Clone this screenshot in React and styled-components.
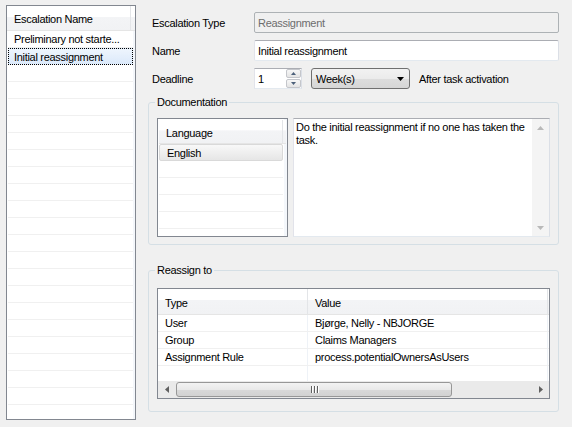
import React from 'react';
import styled, { createGlobalStyle } from 'styled-components';

const escalations = ['Preliminary not starte...', 'Initial reassignment'];
const languages = ['English'];
const assignees = [
  { type: 'User', value: 'Bjørge, Nelly - NBJORGE' },
  { type: 'Group', value: 'Claims Managers' },
  { type: 'Assignment Rule', value: 'process.potentialOwnersAsUsers' },
  { type: '', value: '' },
];

const pad = (items, count) => [...items, ...Array(Math.max(0, count - items.length)).fill('')];

const Arrow = ({ dir, color = '#000', w = 7, h = 4 }) => {
  const pts = {
    up: `0,${h} ${w / 2},0 ${w},${h}`,
    down: `0,0 ${w},0 ${w / 2},${h}`,
    left: `${h},0 ${h},${w} 0,${w / 2}`,
    right: `0,0 0,${w} ${h},${w / 2}`,
  }[dir];
  const horiz = dir === 'left' || dir === 'right';
  return (
    <Glyph width={horiz ? h : w} height={horiz ? w : h}>
      <polygon points={pts} fill={color} />
    </Glyph>
  );
};

const App = () => {
  return (
    <>
      <GlobalStyle />
      <Window>
        <NameList>
          <ListHeader $height={25}>
            <HeaderCell $width={124}>Escalation Name</HeaderCell>
          </ListHeader>
          {pad(escalations, 23).map((name, i) => (
            <NameRow key={i} $selected={i === 1}>
              {name}
            </NameRow>
          ))}
        </NameList>

        <Main>
          <FormRow>
            <Label>Escalation Type</Label>
            <TextBox $disabled>Reassignment</TextBox>
          </FormRow>
          <FormRow>
            <Label>Name</Label>
            <TextBox>Initial reassignment</TextBox>
          </FormRow>
          <FormRow>
            <Label>Deadline</Label>
            <NumberBox>
              <span>1</span>
              <Spinner>
                <SpinButton>
                  <Arrow dir="up" color="#4c607a" w={5} h={3} />
                </SpinButton>
                <SpinButton>
                  <Arrow dir="down" color="#4c607a" w={5} h={3} />
                </SpinButton>
              </Spinner>
            </NumberBox>
            <ComboBox>
              <span>Week(s)</span>
              <Arrow dir="down" w={7} h={4} />
            </ComboBox>
            <Hint>After task activation</Hint>
          </FormRow>

          <Group $top={7} $padTop={9} $padBottom={7}>
            <Legend>Documentation</Legend>
            <DocBody>
              <LangList>
                <ListHeader $height={24}>
                  <HeaderCell $width={124}>Language</HeaderCell>
                </ListHeader>
                {pad(languages, 6).map((lang, i) => (
                  <LangRow key={i} $selected={i === 0}>
                    {lang}
                  </LangRow>
                ))}
              </LangList>
              <MemoBox>
                <MemoText>Do the initial reassignment if no one has taken the task.</MemoText>
                <VScroll>
                  <ScrollButton>
                    <Arrow dir="up" color="#b9b9b9" w={7} h={4} />
                  </ScrollButton>
                  <ScrollButton>
                    <Arrow dir="down" color="#b9b9b9" w={7} h={4} />
                  </ScrollButton>
                </VScroll>
              </MemoBox>
            </DocBody>
          </Group>

          <Group $top={19} $padTop={11} $padBottom={12}>
            <Legend>Reassign to</Legend>
            <Table>
              <TableBody>
                <ListHeader $height={26}>
                  <HeaderCell $width={150}>Type</HeaderCell>
                  <HeaderCell $width={240}>Value</HeaderCell>
                </ListHeader>
                {assignees.map((row, i) => (
                  <TableRow key={i}>
                    <Cell $width={150}>{row.type}</Cell>
                    <Cell $width={240}>{row.value}</Cell>
                  </TableRow>
                ))}
              </TableBody>
              <HScroll>
                <ScrollButton>
                  <Arrow dir="left" color="#606060" w={7} h={4} />
                </ScrollButton>
                <Track>
                  <Thumb>
                    <Grip />
                    <Grip />
                    <Grip />
                  </Thumb>
                </Track>
                <ScrollButton>
                  <Arrow dir="right" color="#606060" w={7} h={4} />
                </ScrollButton>
              </HScroll>
            </Table>
          </Group>
        </Main>
      </Window>
    </>
  );
};

export default App;

// Styled Components
const GlobalStyle = createGlobalStyle`
  html, body {
    margin: 0;
    padding: 0;
    background: #f0f0f0;
  }

  body {
    font-family: "Liberation Sans", Arial, sans-serif;
    font-size: 11px;
    letter-spacing: -0.3px;
    color: #000;
  }
`;

const Glyph = styled.svg`
  display: block;
`;

const Window = styled.div`
  width: 572px;
  height: 427px;
  display: flex;
  background: #f0f0f0;
  overflow: hidden;
`;

const NameList = styled.div`
  margin: 5px 0 0 6px;
  width: 130px;
  height: 415px;
  box-sizing: border-box;
  border: 1px solid #828790;
  background: linear-gradient(to right, #fff 0, #fff 126px, #f4f7fb 126px);
  overflow: hidden;
  display: flex;
  flex-direction: column;
  flex-shrink: 0;
`;

const ListHeader = styled.div`
  display: flex;
  flex-shrink: 0;
  height: ${(p) => p.$height}px;
  box-sizing: border-box;
  border-bottom: 1px solid #e5e5e5;
  background: linear-gradient(#ffffff 0%, #ffffff 45%, #f3f4f6 46%, #f1f2f4 100%);
`;

const HeaderCell = styled.div`
  width: ${(p) => p.$width}px;
  flex-shrink: 0;
  box-sizing: border-box;
  display: flex;
  align-items: center;
  padding: 2px 0 0 7px;
  border-right: 1px solid #e3e5e8;
`;

const NameRow = styled.div`
  flex-shrink: 0;
  width: 125px;
  height: 17px;
  margin-left: 1px;
  box-sizing: border-box;
  display: flex;
  align-items: center;
  padding-left: 6px;
  white-space: nowrap;
  background: #fff;
  border-bottom: 1px solid #f0f0f0;
  ${(p) =>
    p.$selected &&
    `
    border: 1px dotted #000;
    padding-left: 5px;
    background: linear-gradient(#eef5fd, #dbe9fa);
  `}
`;

const Main = styled.div`
  flex: 1;
  padding: 12px 13px 0 12px;
  display: flex;
  flex-direction: column;
`;

const FormRow = styled.div`
  display: flex;
  align-items: center;
  height: 21px;
  padding-left: 4px;
  margin-bottom: 7px;

  &:nth-of-type(3) {
    margin-bottom: 0;
  }
`;

const Label = styled.div`
  width: 102px;
  flex-shrink: 0;
`;

const TextBox = styled.div`
  flex: 1;
  height: 21px;
  box-sizing: border-box;
  display: flex;
  align-items: center;
  padding-left: 3px;
  border: 1px solid;
  border-color: #abadb3 #dbdfe6 #e3e9ef #e2e3ea;
  border-radius: 2px;
  background: ${(p) => (p.$disabled ? '#f0f0f0' : '#fff')};
  color: ${(p) => (p.$disabled ? '#6d6d6d' : '#000')};
  ${(p) => p.$disabled && 'border-color: #adb2b5;'}
`;

const NumberBox = styled.div`
  width: 48px;
  height: 21px;
  box-sizing: border-box;
  display: flex;
  align-items: center;
  justify-content: space-between;
  padding-left: 3px;
  border: 1px solid;
  border-color: #abadb3 #dbdfe6 #e3e9ef #e2e3ea;
  background: #fff;
`;

const Spinner = styled.div`
  display: flex;
  flex-direction: column;
  gap: 1px;
  width: 15px;
  height: 19px;
`;

const SpinButton = styled.div`
  flex: 1;
  display: flex;
  align-items: center;
  justify-content: center;
  box-sizing: border-box;
  border: 1px solid #c4c6cb;
  border-radius: 2px;
  background: linear-gradient(#f7f7f7, #e4e4e4);
`;

const ComboBox = styled.div`
  width: 99px;
  height: 21px;
  margin-left: 9px;
  box-sizing: border-box;
  display: flex;
  align-items: center;
  justify-content: space-between;
  padding: 0 5px 0 4px;
  border: 1px solid #707070;
  border-radius: 3px;
  background: linear-gradient(#f2f2f2 0%, #ebebeb 50%, #dddddd 51%, #d6d6d6 100%);
`;

const Hint = styled.div`
  margin-left: 9px;
`;

const Group = styled.fieldset`
  margin: ${(p) => p.$top}px 0 0;
  padding: ${(p) => p.$padTop}px 8px ${(p) => p.$padBottom}px;
  border: 1px solid #d5dfe5;
  border-radius: 3px;
  min-width: 0;
`;

const Legend = styled.legend`
  padding: 0 2px;
  margin-left: -2px;
  line-height: 13px;
  height: 13px;
`;

const DocBody = styled.div`
  display: flex;
  gap: 5px;
  height: 119px;
`;

const LangList = styled.div`
  width: 131px;
  height: 119px;
  box-sizing: border-box;
  border: 1px solid #828790;
  background: linear-gradient(to right, #fff 0, #fff 126px, #f4f7fb 126px);
  padding: 1px;
  overflow: hidden;
  display: flex;
  flex-direction: column;
`;

const LangRow = styled.div`
  flex-shrink: 0;
  width: 124px;
  height: 17px;
  box-sizing: border-box;
  display: flex;
  align-items: center;
  padding-left: 7px;
  background: #fff;
  border-bottom: 1px solid #f0f0f0;
  ${(p) =>
    p.$selected &&
    `
    border: 1px solid #d9d9d9;
    border-radius: 2px;
    background: linear-gradient(#f8f8f8, #e6e6e6);
  `}
`;

const MemoBox = styled.div`
  flex: 1;
  display: flex;
  box-sizing: border-box;
  border: 1px solid;
  border-color: #abadb3 #dbdfe6 #e3e9ef #e2e3ea;
  background: #fff;
`;

const MemoText = styled.div`
  flex: 1;
  padding: 2px 2px 0 2px;
  line-height: 13px;
`;

const VScroll = styled.div`
  width: 17px;
  display: flex;
  flex-direction: column;
  justify-content: space-between;
  background: #f4f4f4;
`;

const ScrollButton = styled.div`
  width: 17px;
  height: 17px;
  flex-shrink: 0;
  display: flex;
  align-items: center;
  justify-content: center;
`;

const Table = styled.div`
  height: 111px;
  box-sizing: border-box;
  border: 1px solid #828790;
  background: #fff;
  display: flex;
  flex-direction: column;
`;

const TableBody = styled.div`
  flex: 1;
  overflow: hidden;
`;

const TableRow = styled.div`
  display: flex;
  height: 17px;
  box-sizing: border-box;
  border-bottom: 1px solid #f0f0f0;
`;

const Cell = styled.div`
  width: ${(p) => p.$width}px;
  flex-shrink: 0;
  box-sizing: border-box;
  display: flex;
  align-items: center;
  padding-left: 7px;
  white-space: nowrap;
  border-right: 1px solid #eef2f7;
`;

const HScroll = styled.div`
  height: 17px;
  display: flex;
  align-items: center;
  background: #eaeaea;
`;

const Track = styled.div`
  flex: 1;
  height: 17px;
  display: flex;
  align-items: center;
  padding-left: 1px;
`;

const Thumb = styled.div`
  width: 276px;
  height: 15px;
  box-sizing: border-box;
  display: flex;
  align-items: center;
  justify-content: center;
  gap: 2px;
  border: 1px solid #979797;
  border-radius: 3px;
  background: linear-gradient(#f3f3f3 0%, #e9e9e9 50%, #d9d9d9 51%, #d2d2d2 100%);
`;

const Grip = styled.div`
  width: 1px;
  height: 7px;
  background: #5f5f5f;
  box-shadow: 1px 0 0 #ffffff;
`;
